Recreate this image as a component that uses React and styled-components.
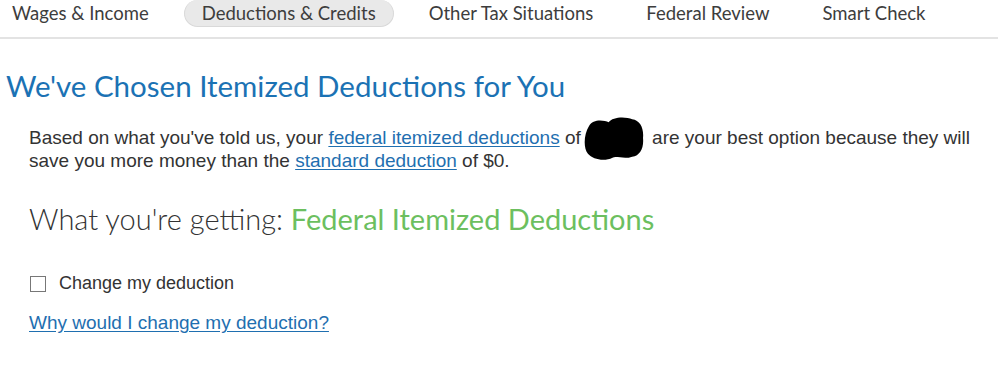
import React from "react";
import styled, { createGlobalStyle } from "styled-components";

const GlobalStyle = createGlobalStyle`
  html, body {
    margin: 0;
    padding: 0;
    background: #fff;
  }
  body {
    font-family: "Liberation Sans", Arial, sans-serif;
    color: #333;
  }
`;

const Page = styled.div`
  width: 998px;
  height: 383px;
  overflow: hidden;
  background: #fff;
`;

const Nav = styled.nav`
  display: flex;
  align-items: center;
  gap: 17px;
  height: 27px;
  padding: 0 0 10px 0;
  margin-left: -6px;
  border-bottom: 2px solid #e3e3e3;
`;

const NavItem = styled.div`
  display: flex;
  align-items: center;
  height: 27px;
  padding: 0 17px;
  box-sizing: border-box;
  font-family: Lato, "Open Sans", sans-serif;
  font-size: 18.5px;
  color: #3d3d3d;
  white-space: nowrap;
  border-radius: 14px;
  background: ${(p) => (p.$active ? "#e9e9e9" : "transparent")};
  border: 1px solid ${(p) => (p.$active ? "#d9d9d9" : "transparent")};
  border-top: none;
`;

const Heading = styled.h1`
  margin: 30px 0 0 6px;
  font-family: Lato, "Open Sans", sans-serif;
  font-weight: 400;
  font-size: 29.5px;
  line-height: 34px;
  color: #1b72b4;
`;

const Body = styled.p`
  margin: 23px 0 0 29px;
  width: 955px;
  font-size: 19px;
  line-height: 23px;
  color: #333;
`;

const TextLink = styled.a`
  color: #1f6fb0;
  text-decoration: underline;
  text-underline-offset: 2px;
  cursor: pointer;
`;

const Redacted = styled.span`
  position: relative;
  display: inline-block;
  width: 66px;
  height: 18px;
  vertical-align: middle;
`;

const Blob = styled.svg`
  position: absolute;
  left: 2px;
  top: -14px;
  width: 61px;
  height: 45px;
`;

const Getting = styled.h2`
  margin: 30px 0 0 29px;
  font-family: Lato, "Open Sans", sans-serif;
  font-weight: 300;
  font-size: 29px;
  line-height: 34px;
  color: #333;
`;

const Green = styled.span`
  color: #6cbf5f;
  font-weight: 400;
`;

const CheckRow = styled.label`
  display: flex;
  align-items: center;
  gap: 13px;
  margin: 37px 0 0 30px;
  font-size: 18px;
  color: #333;
  cursor: pointer;
`;

const Box = styled.span`
  width: 16px;
  height: 16px;
  box-sizing: border-box;
  border: 1px solid #777;
  background: #fff;
`;

const HelpLink = styled(TextLink)`
  display: inline-block;
  margin: 18px 0 0 29px;
  font-size: 19px;
`;

export default function App() {
  const tabs = [
    "Wages & Income",
    "Deductions & Credits",
    "Other Tax Situations",
    "Federal Review",
    "Smart Check",
  ];
  return (
    <Page>
      <GlobalStyle />
      <Nav>
        {tabs.map((t, i) => (
          <NavItem key={t} $active={i === 1}>
            {t}
          </NavItem>
        ))}
      </Nav>
      <Heading>We've Chosen Itemized Deductions for You</Heading>
      <Body>
        Based on what you've told us, your{" "}
        <TextLink>federal itemized deductions</TextLink> of
        <Redacted>
          <Blob viewBox="0 0 62 45">
            <path
              d="M6 10 C10 2 22 4 26 6 C30 0 44 0 50 3 C58 4 62 12 61 22 C62 32 58 40 50 41 C42 44 34 40 30 42 C22 46 10 44 5 38 C0 32 1 18 6 10 Z"
              fill="#000"
            />
          </Blob>
        </Redacted>
        {" "}are your best option because they will save you more money than the{" "}
        <TextLink>standard deduction</TextLink> of $0.
      </Body>
      <Getting>
        What you're getting: <Green>Federal Itemized Deductions</Green>
      </Getting>
      <CheckRow>
        <Box />
        Change my deduction
      </CheckRow>
      <HelpLink>Why would I change my deduction?</HelpLink>
    </Page>
  );
}
